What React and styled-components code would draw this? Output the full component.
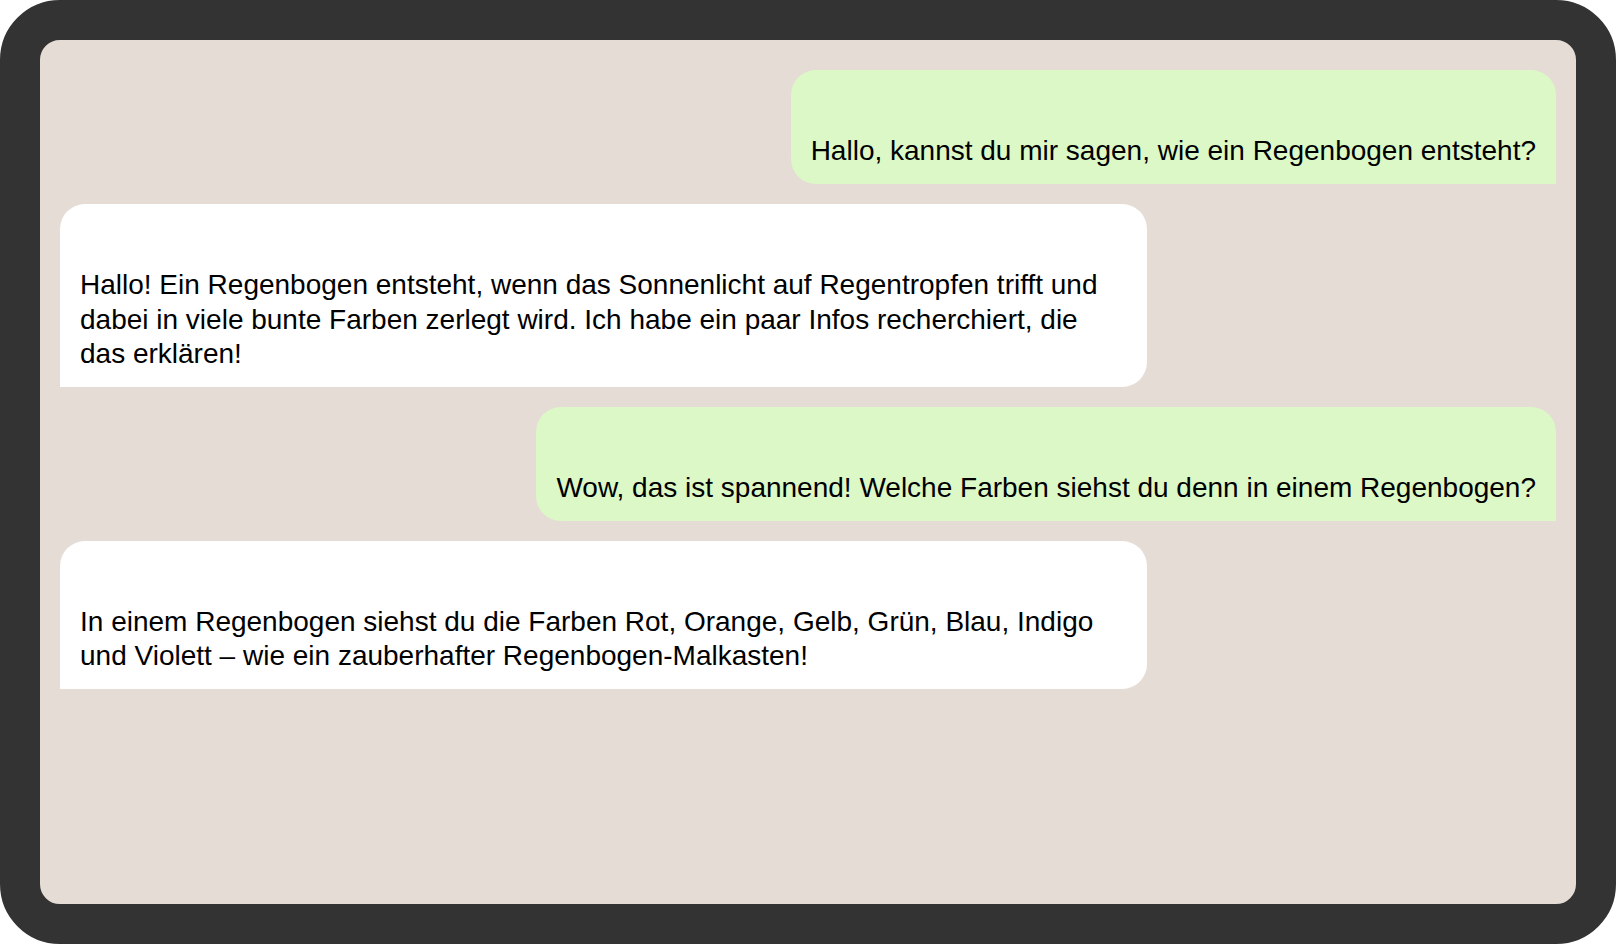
import React from 'react'
import styled, { createGlobalStyle } from 'styled-components';

const GlobalStyle = createGlobalStyle`
    html, body {
        margin: 0;
        padding: 0;
        background: #fff;
    }
    body {
        font-family: "Liberation Sans", Arial, sans-serif;
    }
`;

const Frame = styled.div`
    box-sizing: border-box;
    width: 100vw;
    height: 100vh;
    border: 40px solid #333;
    border-radius: 60px;
    background: #e5ddd5;
    overflow: hidden;
`;

const ChatList = styled.div`
    display: flex;
    flex-direction: column;
    gap: 20px;
    padding: 30px 20px;
`;

const Bubble = styled.div`
    align-self: ${(p) => (p.$mine ? 'flex-end' : 'flex-start')};
    max-width: 70%;
    padding: 30px 20px 15.5px;
    background: ${(p) => (p.$mine ? '#dcf8c6' : '#fff')};
    border-radius: ${(p) => (p.$mine ? '25px 25px 0 25px' : '25px 25px 25px 0')};
    color: #000;
    font-size: 28px;
    line-height: 34.25px;
`;

const Sender = styled.div`
    height: 34.25px;
`;

const Text = styled.div``;

const messages = [
    { mine: true, text: 'Hallo, kannst du mir sagen, wie ein Regenbogen entsteht?' },
    { mine: false, text: 'Hallo! Ein Regenbogen entsteht, wenn das Sonnenlicht auf Regentropfen trifft und dabei in viele bunte Farben zerlegt wird. Ich habe ein paar Infos recherchiert, die das erklären!' },
    { mine: true, text: 'Wow, das ist spannend! Welche Farben siehst du denn in einem Regenbogen?' },
    { mine: false, text: 'In einem Regenbogen siehst du die Farben Rot, Orange, Gelb, Grün, Blau, Indigo und Violett – wie ein zauberhafter Regenbogen-Malkasten!' },
];

const App = () => {
  return (
    <>
      <GlobalStyle />
      <Frame>
        <ChatList>
          {messages.map((m, i) => (
            <Bubble key={i} $mine={m.mine}>
              <Sender />
              <Text>{m.text}</Text>
            </Bubble>
          ))}
        </ChatList>
      </Frame>
    </>
  )
}

export default App
